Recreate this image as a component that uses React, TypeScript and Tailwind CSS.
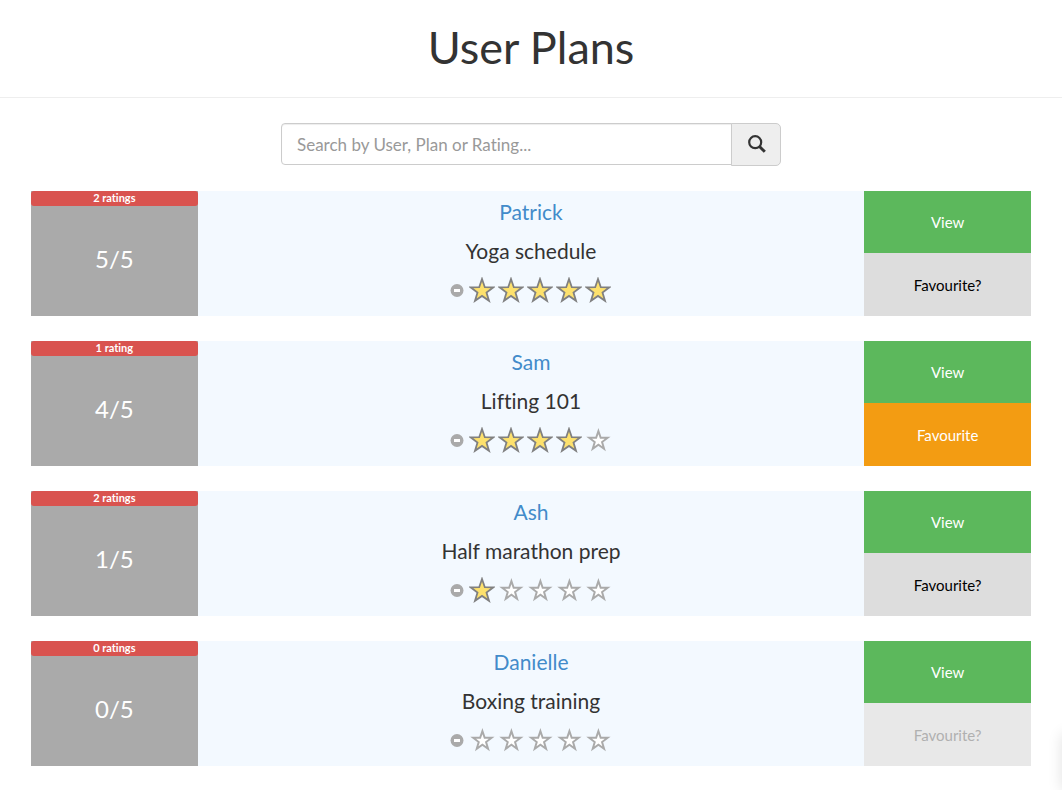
type Plan = {
  user: string;
  title: string;
  rating: number;
  votes: number;
  favourite: boolean;
  disabled?: boolean;
};

const plans: Plan[] = [
  { user: "Patrick", title: "Yoga schedule", rating: 5, votes: 2, favourite: false },
  { user: "Sam", title: "Lifting 101", rating: 4, votes: 1, favourite: true },
  { user: "Ash", title: "Half marathon prep", rating: 1, votes: 2, favourite: false },
  { user: "Danielle", title: "Boxing training", rating: 0, votes: 0, favourite: false, disabled: true },
];

const STAR = "M12 1 L14.8 9.2 L23.4 9.3 L16.5 14.5 L19 22.8 L12 17.9 L5 22.8 L7.5 14.5 L0.6 9.3 L9.2 9.2 Z";

function Star({ filled }: { filled: boolean }) {
  return filled ? (
    <svg viewBox="-1 -1 26 26" className="size-[26px]" aria-hidden="true">
      <path d={STAR} fill="#fde16d" stroke="#808080" strokeWidth="1.8" />
    </svg>
  ) : (
    <svg viewBox="-4.5 -4 32 32" className="size-[26px]" aria-hidden="true">
      <path d={STAR} fill="#fff" stroke="#aaa" strokeWidth="2.4" />
    </svg>
  );
}

function Rating({ value }: { value: number }) {
  return (
    <div className="flex items-center justify-center gap-1">
      <button type="button" aria-label="Clear rating" className="block">
        <svg viewBox="0 0 14 14" className="size-[14px]" aria-hidden="true">
          <circle cx="7" cy="7.5" r="6.5" fill="#aaa" />
          <rect x="4" y="6" width="6" height="3" fill="#fff" />
        </svg>
      </button>
      <div className="grid w-36 grid-cols-5">
        {[1, 2, 3, 4, 5].map((n) => (
          <button key={n} type="button" aria-label={`Rate ${n}`} className="flex justify-center">
            <Star filled={n <= value} />
          </button>
        ))}
      </div>
    </div>
  );
}

function PlanRow({ plan }: { plan: Plan }) {
  return (
    <li className="grid min-h-[125px] grid-cols-6">
      <div className="flex flex-col bg-[#aaa] text-white">
        <span className="rounded-[3px] bg-[#d9534f] pb-px text-center text-[11px] leading-[14px] font-bold">
          {plan.votes} {plan.votes === 1 ? "rating" : "ratings"}
        </span>
        <span className="flex flex-1 items-center justify-center pb-1 text-[24px] leading-7">{plan.rating}/5</span>
      </div>
      <div className="col-span-4 flex flex-col items-center bg-[#f3f9ff] pt-[7px] text-[21px] leading-7">
        <a href="#" className="text-[#428bca]">{plan.user}</a>
        <h2 className="my-[11px]">{plan.title}</h2>
        <div className="pt-px">
          <Rating value={plan.rating} />
        </div>
      </div>
      <div className="grid grid-rows-[62px_1fr] text-[15px] leading-5">
        <button type="button" className="bg-[#5cb85c] text-white">View</button>
        <button
          type="button"
          disabled={plan.disabled}
          className={
            plan.favourite
              ? "bg-[#f39c12] text-white"
              : "bg-[#ddd] text-black disabled:bg-[#e8e8e8] disabled:text-[#b0b0b0]"
          }
        >
          {plan.favourite ? "Favourite" : "Favourite?"}
        </button>
      </div>
    </li>
  );
}

export default function App() {
  return (
    <div className="overflow-x-hidden bg-white font-['Lato',sans-serif] text-[#333] [font-variant-ligatures:none]">
      <header className="border-b border-[#eee] pt-[19px] pb-[22px]">
        <h1 className="text-center text-[45px] leading-14">User Plans</h1>
      </header>
      <main className="mx-auto max-w-[1000px] pt-[25px] pb-6">
        <form className="mx-auto flex max-w-[500px] items-start" onSubmit={(e) => e.preventDefault()}>
          <input
            type="text"
            aria-label="Search plans"
            placeholder="Search by User, Plan or Rating..."
            className="h-[42px] min-w-0 flex-1 rounded-l-[4px] border border-[#ccc] px-[15px] text-[17px] shadow-[inset_0_1px_1px_rgba(0,0,0,0.075)] placeholder:text-[#999]"
          />
          <button
            type="submit"
            aria-label="Search"
            className="-ml-px flex h-[43px] w-[50px] items-center justify-center rounded-r-[5px] border border-[#ccc] bg-[#eee] pb-px pl-px"
          >
            <svg viewBox="0 0 18 18" className="size-[18px]" fill="none" stroke="#333" aria-hidden="true">
              <circle cx="7.2" cy="7.2" r="6" strokeWidth="2.2" />
              <path d="M11.5 11.5 L16.8 16.8" strokeWidth="3" />
            </svg>
          </button>
        </form>
        <ul className="mt-[25px] flex flex-col gap-[25px]">
          {plans.map((plan) => (
            <PlanRow key={plan.user} plan={plan} />
          ))}
        </ul>
      </main>
      <div aria-hidden="true" className="fixed bottom-0 left-full h-14 w-16 shadow-[0_0_14px_rgba(0,0,0,0.12)]" />
    </div>
  );
}
